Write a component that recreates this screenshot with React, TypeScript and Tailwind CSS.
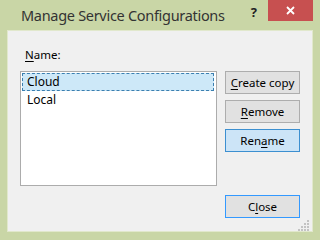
import React from "react";

const ui = { fontFamily: '"Noto Sans", "Open Sans", Arial, sans-serif' };

interface BtnProps {
  label: React.ReactNode;
  variant?: "plain" | "hover" | "default";
}

const Btn = ({ label, variant = "plain" }: BtnProps) => {
  const look =
    variant === "hover"
      ? "bg-[#cce4f7] border-[#3c8fd0]"
      : variant === "default"
      ? "bg-[#e1e1e1] border-[#3399ff]"
      : "bg-[#e1e1e1] border-[#adadad]";
  return (
    <div
      className={`flex items-center justify-center w-[75px] h-[23px] border text-[11.5px] text-black ${look}`}
    >
      {label}
    </div>
  );
};

const U = ({ children }: { children: React.ReactNode }) => (
  <span className="underline underline-offset-2">{children}</span>
);

const Grip = () => (
  <svg width="12" height="12" viewBox="0 0 12 12" className="block">
    {[
      [9, 1],
      [6, 4],
      [9, 4],
      [3, 7],
      [6, 7],
      [9, 7],
      [0, 10],
      [3, 10],
      [6, 10],
      [9, 10],
    ].map(([x, y], i) => (
      <rect key={i} x={x} y={y} width="2" height="2" fill="#c3c3c3" />
    ))}
  </svg>
);

const App = () => {
  return (
    <div className="w-[320px] h-[240px] bg-[#c9d6a6] flex flex-col" style={ui}>
      {/* title bar */}
      <div className="flex h-[30px] items-start">
        <div className="pl-[21px] pt-[5px] text-[14.5px] text-[#333] leading-[20px] tracking-[-0.3px]">
          Manage Service Configurations
        </div>
        <div className="ml-auto pt-[5px] pr-[11px] text-[13px] font-bold text-[#222] leading-[14px]">?</div>
        <div className="w-[45px] h-[21px] mr-[7px] bg-[#c75050] flex items-center justify-center">
          <svg width="9" height="9" viewBox="0 0 9 9">
            <path d="M1 1 L8 8 M8 1 L1 8" stroke="#fff" strokeWidth="1.8" />
          </svg>
        </div>
      </div>

      {/* client area */}
      <div className="ml-[7px] w-[306px] h-[202px] border border-[#e1e8cc] bg-[#f0f0f0] flex flex-col px-[12px] pt-[16px]">
        <div className="h-[26px] pl-[5px] text-[11.5px] leading-[16px] text-black">
          <U>N</U>ame:
        </div>
        <div className="flex gap-[8px]">
          <div className="w-[197px] h-[115px] border border-[#acacac] bg-white py-px pl-px pr-[2px] text-[12px] text-black">
            <div className="h-[18px] bg-[#cde8f8] border border-dashed border-[#3b7fb0] flex items-center pl-[4px] leading-none">
              Cloud
            </div>
            <div className="h-[18px] flex items-center pl-[5px] leading-none">Local</div>
          </div>
          <div className="flex flex-col gap-[6px]">
            <Btn label={<><U>C</U>reate copy</>} />
            <Btn label={<><U>R</U>emove</>} />
            <Btn label={<>Ren<U>a</U>me</>} variant="hover" />
          </div>
        </div>
        <div className="flex justify-end mt-[9px]">
          <Btn label={<>C<U>l</U>ose</>} variant="default" />
        </div>
        <div className="flex justify-end mt-[1px] mr-[-10px]">
          <Grip />
        </div>
      </div>
    </div>
  );
};

export default App;
